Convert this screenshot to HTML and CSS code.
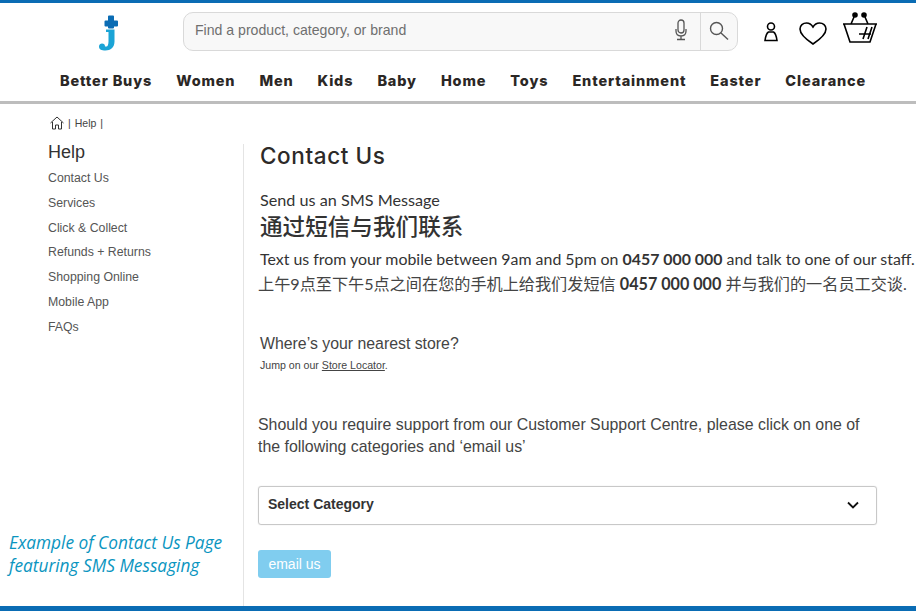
FILE: index.html
```html
<!DOCTYPE html>
<html lang="en">
<head>
<meta charset="utf-8">
<title>Contact Us</title>
<link rel="stylesheet" href="styles.css">
</head>
<body>
<div class="page">
  <header class="header">
    <div class="top">
      <svg class="logo" width="20" height="40" viewBox="0 0 20 40">
        <path d="M10 1.500q0-1 1-1h4q1 0 1 1v4h3q1 0 1 1v4q0 1-1 1h-3v1q0 1-1 1h-4q-1 0-1-1v-1H7.500q-1 0-1-1v-4q0-1 1-1H10z" fill="#0a6cb4"/>
        <path d="M8 14.500h8.500v12c0 6-4 9-9 9-4 0-6.500-1-6.500-4 0-2 1.500-3 3-3 2 0 3 1 3 3h1.500c1 0 2-2 2-5V17H8z" fill="#1ba4d6"/>
      </svg>
      <div class="search">
        <span class="search-text">Find a product, category, or brand</span>
        <svg class="mic" width="14" height="22" viewBox="0 0 14 22" fill="none" stroke="#555" stroke-width="1.300">
          <rect x="4" y="1" width="6" height="13" rx="3"/>
          <path d="M2 10v2c0 3 2 5 5 5s5-2 5-5v-2M7 17v3M3 20.500h8"/>
        </svg>
        <div class="search-btn">
          <svg width="20" height="20" viewBox="0 0 20 20" fill="none" stroke="#555" stroke-width="1.400">
            <circle cx="7.500" cy="7.500" r="6"/>
            <path d="M12 12l7 6.500"/>
          </svg>
        </div>
      </div>
      <div class="actions">
        <svg width="14" height="20" viewBox="0 0 14 20" fill="none" stroke="#000" stroke-width="1.600">
          <circle cx="7" cy="4.500" r="3.500"/>
          <path d="M4.500 10h5c2 1 3 5 3.500 8.500H1c.5-3.500 1.500-7.500 3.500-8.500z"/>
        </svg>
        <svg width="28" height="23" viewBox="0 0 28 23" fill="none" stroke="#000" stroke-width="1.600">
          <path d="M14 22C8 18 1 13 1 7c0-3.500 3-6 6.500-6 3 0 5 1.500 6.500 4 1.500-2.500 3.500-4 6.500-4C24 1 27 3.500 27 7c0 6-7 11-13 15z"/>
        </svg>
        <svg class="basket" width="36" height="32" viewBox="0 0 36 32" fill="none" stroke="#000" stroke-width="1.600">
          <circle cx="13" cy="3" r="2" fill="#000"/>
          <circle cx="22" cy="3" r="2" fill="#000"/>
          <path d="M12 5l-3 7M23 5l3 7M1 12h34M2 12l6 18h20l6-18M17 22h12M25 15l-4 12M30 15l-4 12"/>
        </svg>
      </div>
    </div>
    <nav class="nav">
      <a>Better Buys</a><a>Women</a><a>Men</a><a>Kids</a><a>Baby</a><a>Home</a><a>Toys</a><a>Entertainment</a><a>Easter</a><a>Clearance</a>
    </nav>
  </header>
  <div class="body">
    <aside class="side">
      <div class="crumb">
        <svg width="14" height="14" viewBox="0 0 14 14" fill="none" stroke="#333" stroke-width="1">
          <path d="M0.500 7L7 1l6.500 6M2.500 6v7h3V9h3v4h3V6"/>
        </svg>
        <span>|</span><span>Help</span><span>|</span>
      </div>
      <h2 class="side-title">Help</h2>
      <ul class="side-list">
        <li>Contact Us</li><li>Services</li><li>Click &amp; Collect</li><li>Refunds + Returns</li><li>Shopping Online</li><li>Mobile App</li><li>FAQs</li>
      </ul>
      <p class="caption">Example of Contact Us Page<br>featuring SMS Messaging</p>
    </aside>
    <main class="content">
      <h1 class="title">Contact Us</h1>
      <p class="sms">Send us an SMS Message</p>
      <p class="sms-cn">通过短信与我们联系</p>
      <p class="text">Text us from your mobile between 9am and 5pm on <b>0457 000 000</b> and talk to one of our staff.</p>
      <p class="text-cn">上午9点至下午5点之间在您的手机上给我们发短信 <b>0457 000 000</b> 并与我们的一名员工交谈.</p>
      <p class="store">Where’s your nearest store?</p>
      <p class="jump">Jump on our <u>Store Locator</u>.</p>
      <p class="support">Should you require support from our Customer Support Centre, please click on one of<br>the following categories and ‘email us’</p>
      <div class="select">
        <span class="select-label">Select Category</span>
        <svg width="12" height="8" viewBox="0 0 12 8" fill="none" stroke="#111" stroke-width="1.800"><path d="M1 1.500l5 5 5-5"/></svg>
      </div>
      <div class="btn">email us</div>
    </main>
  </div>
</div>
</body>
</html>
```
FILE: styles.css
```css
* { box-sizing: border-box; }
html, body { margin: 0; padding: 0; }
body { background: #fff; font-family: "Liberation Sans", Arial, sans-serif; color: #333; overflow: hidden; }
.page { width: 916px; height: 611px; display: flex; flex-direction: column; border-top: 3px solid #0a6cb4; border-bottom: 5px solid #0a6cb4; overflow: hidden; }
.header { height: 101px; border-bottom: 3px solid #bdbdbd; flex: none; }
.top { display: flex; align-items: flex-start; height: 60px; padding-left: 98px; }
.logo { margin-top: 12px; }
.search { margin: 9px 0 0 65px; width: 555px; height: 39px; background: #f8f8f8; border: 1px solid #d9d9d9; border-radius: 10px; display: flex; align-items: center; padding-left: 11px; }
.search-text { flex: 1; font-size: 14.100px; color: #6f6f6f; padding-bottom: 3px; }
.mic { margin-right: 12px; margin-bottom: 3px; }
.search-btn { width: 37px; height: 37px; border-left: 1px solid #d9d9d9; display: flex; align-items: center; justify-content: center; padding-bottom: 1px; }
.actions { display: flex; align-items: flex-start; margin-left: 26px; gap: 21px; }
.actions svg { margin-top: 19px; }
.actions .basket { margin-top: 9px; margin-left: -6px; }
.nav { display: flex; gap: 24px; padding-left: 60px; font-family: "Inter", sans-serif; font-weight: 800; font-size: 14.500px; letter-spacing: 0.850px; color: #2b2725; line-height: 18px; margin-top: 9px; }
.body { flex: 1; display: flex; min-height: 0; }
.side { width: 243px; flex: none; padding-left: 48px; position: relative; }
.crumb { display: flex; align-items: center; gap: 4px; margin: 12px 0 0 2px; font-size: 10.500px; color: #444; height: 14px; }
.side-title { margin: 11px 0 0; font-size: 18px; font-weight: 400; color: #333; line-height: 22px; }
.side-list { list-style: none; margin: 3px 0 0; padding: 0; font-size: 12.300px; color: #555; }
.side-list li { height: 24.800px; line-height: 24.800px; }
.caption { position: absolute; left: 9px; top: 427px; margin: 0; font-family: "Open Sans", sans-serif; font-style: italic; font-size: 17.300px; line-height: 23px; color: #0a95bf; }
.content { flex: 1; border-left: 1px solid #e4e4e4; margin-top: 40px; padding-left: 14px; position: relative; }
.title { margin: -2px 0 0 2px; font-family: "Inter", sans-serif; font-weight: 500; font-size: 22.500px; letter-spacing: 0.600px; line-height: 28px; color: #2d2a28; }
.sms { margin: 20px 0 0 2px; font-family: "Lato", sans-serif; font-size: 16.200px; line-height: 19px; color: #333; }
.sms-cn { margin: 0 0 0 2px; font-family: "Noto Sans CJK SC", sans-serif; font-weight: 500; font-size: 22.600px; line-height: 34px; color: #333; }
.text { margin: 4px 0 0 2px; font-family: "Lato", sans-serif; font-size: 15.900px; line-height: 24px; color: #333; white-space: nowrap; }
.text-cn { margin: 1px 0 0; font-family: "Lato", "Noto Sans CJK SC", sans-serif; font-size: 16.150px; line-height: 24px; color: #444; white-space: nowrap; }
.text-cn b { color: #333; }
.store { margin: 37px 0 0 2px; font-size: 15.850px; line-height: 22px; color: #444; }
.jump { margin: 3px 0 0 2px; font-size: 10.600px; line-height: 14px; color: #444; }
.support { margin: 42px 0 0; font-size: 15.900px; line-height: 22px; color: #444; }
.select { width: 619px; height: 39px; margin-top: 28px; border: 1px solid #c8c8c8; border-radius: 3px; display: flex; align-items: center; justify-content: space-between; padding: 0 17px 0 9px; font-size: 14px; font-weight: 700; color: #333; box-shadow: 0 0 1px #ccc; }
.select-label { padding-bottom: 4px; }
.select svg { margin-bottom: 1px; }
.btn { width: 73px; height: 28px; margin-top: 25px; background: #80cdef; border-radius: 3px; color: #fff; font-size: 14px; display: flex; align-items: center; justify-content: center; }
```
